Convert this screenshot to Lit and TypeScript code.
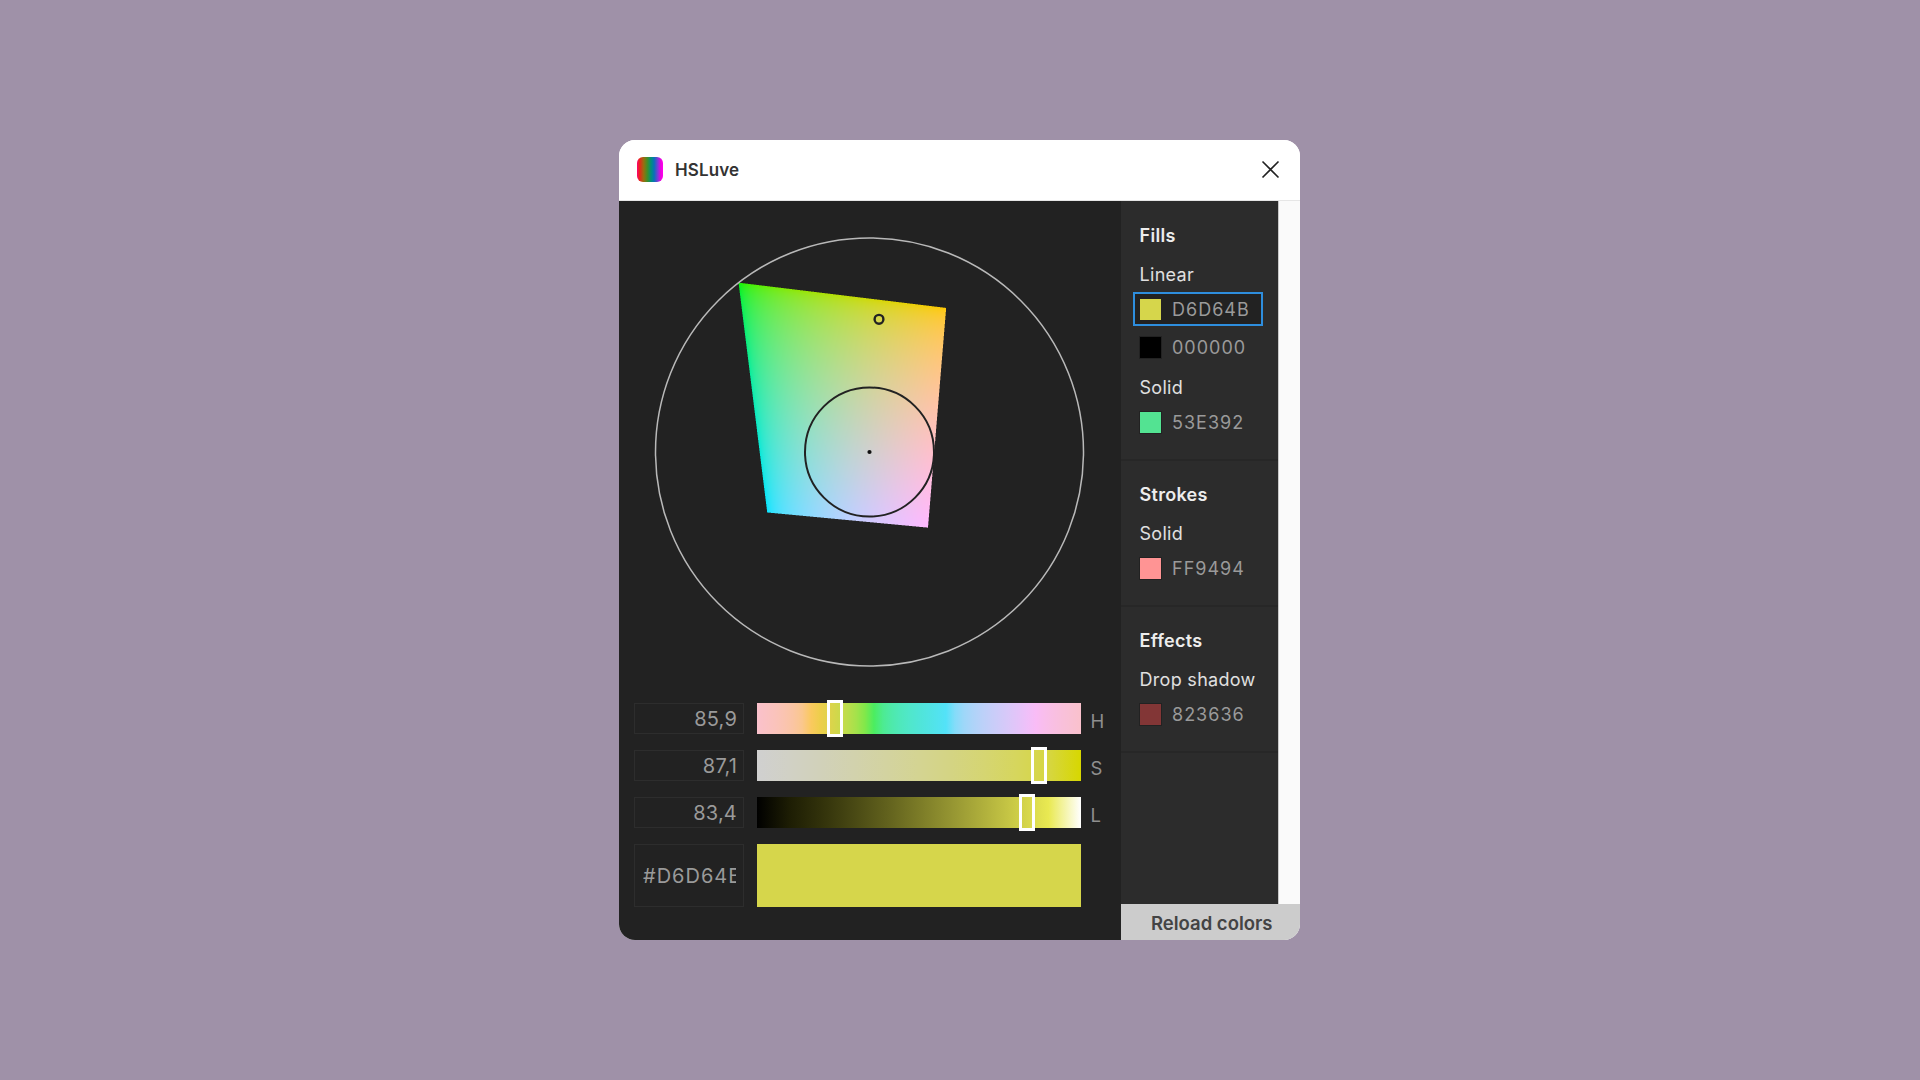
import { LitElement, html, css } from "lit";
import { customElement } from "lit/decorators.js";

const M = [
  [3.240969941904521, -1.537383177570093, -0.498610760292],
  [-0.96924363628087, 1.87596750150772, 0.041555057407175],
  [0.055630079696993, -0.20397695888897, 1.056971514242878],
];
const KAPPA = 903.2962962;
const EPS = 0.0088564516;
const REF_U = 0.19783000664283;
const REF_V = 0.46831999493879;

function luvToLinear(L: number, u: number, v: number): number[] {
  if (L <= 0.00001) return [0, 0, 0];
  const Y = L > 8 ? Math.pow((L + 16) / 116, 3) : L / KAPPA;
  const U = u / (13 * L) + REF_U;
  const V = v / (13 * L) + REF_V;
  const X = (-9 * Y * U) / ((U - 4) * V - U * V);
  const Z = (9 * Y - 15 * V * Y - V * X) / (3 * V);
  return M.map((r) => r[0] * X + r[1] * Y + r[2] * Z);
}
const gamma = (c: number) =>
  c <= 0.0031308 ? 12.92 * c : 1.055 * Math.pow(c, 1 / 2.4) - 0.055;
const toByte = (c: number) =>
  Math.round(Math.min(1, Math.max(0, gamma(Math.max(0, c)))) * 255);

function maxChroma(L: number, H: number): number {
  const s1 = Math.pow(L + 16, 3) / 1560896;
  const s2 = s1 > EPS ? s1 : L / KAPPA;
  const h = (H / 180) * Math.PI;
  let best = Infinity;
  for (const [m1, m2, m3] of M) {
    for (const t of [0, 1]) {
      const top1 = (284517 * m1 - 94839 * m3) * s2;
      const top2 = (838422 * m3 + 769860 * m2 + 731718 * m1) * L * s2 - 769860 * t * L;
      const bottom = (632260 * m3 - 126452 * m2) * s2 + 126452 * t;
      const len = top2 / bottom / (Math.sin(h) - (top1 / bottom) * Math.cos(h));
      if (len >= 0 && len < best) best = len;
    }
  }
  return best;
}
function hsluv(H: number, S: number, L: number): string {
  if (L > 99.9999) return "rgb(255,255,255)";
  if (L < 0.00001) return "rgb(0,0,0)";
  const C = (maxChroma(L, H) / 100) * S;
  const h = (H / 180) * Math.PI;
  const [r, g, b] = luvToLinear(L, C * Math.cos(h), C * Math.sin(h)).map(toByte);
  return `rgb(${r},${g},${b})`;
}
function gradient(fn: (t: number) => string, n: number): string {
  const stops: string[] = [];
  for (let i = 0; i <= n; i++) stops.push(fn(i / n));
  return `linear-gradient(90deg,${stops.join(",")})`;
}

const HUE = 85.9, SAT = 87.1, LIG = 83.4;
const SLIDERS = [
  { value: "85,9", letter: "H", pct: 24.1, bg: gradient((t) => hsluv(t * 360, SAT, LIG), 36) },
  { value: "87,1", letter: "S", pct: SAT, bg: gradient((t) => hsluv(HUE, t * 100, LIG), 10) },
  { value: "83,4", letter: "L", pct: LIG, bg: gradient((t) => hsluv(HUE, SAT, t * 100), 10) },
];

const PANELS = [
  {
    title: "Fills",
    groups: [
      { label: "Linear", rows: [{ hex: "D6D64B", selected: true }, { hex: "000000" }] },
      { label: "Solid", rows: [{ hex: "53E392" }] },
    ],
  },
  { title: "Strokes", groups: [{ label: "Solid", rows: [{ hex: "FF9494" }] }] },
  { title: "Effects", groups: [{ label: "Drop shadow", rows: [{ hex: "823636" }] }] },
];

const SIZE = 501;
const CX = 250.5;
const CY = 251;
const SCALE = 1.657;

@customElement("app-root")
export class AppRoot extends LitElement {
  static styles = css`
    :host {
      display: block;
      width: 1920px;
      height: 1080px;
      box-sizing: border-box;
      padding: 140px 0 0 619px;
      background: #9f91a8;
      font-family: Inter, "Liberation Sans", sans-serif;
    }
    * { box-sizing: border-box; }
    .window {
      width: 681px;
      height: 800px;
      border-radius: 16px;
      overflow: hidden;
      background: #fafafa;
      display: grid;
      grid-template-rows: 61px 1fr;
    }
    .header {
      background: #fff;
      border-bottom: 1px solid #e6e6e6;
      display: flex;
      align-items: center;
      padding: 0 20px 1px 18px;
    }
    .logo {
      width: 26px;
      height: 25px;
      border-radius: 6px;
      background: linear-gradient(90deg, #ff0070 0%, #e8261c 10%, #96700f 26%, #3f8f28 40%, #00907a 54%, #0a70b8 66%, #7a3cd8 80%, #f000e0 92%, #ff00f0 100%);
      margin-right: 12px;
    }
    .title {
      font-size: 17px;
      font-weight: 600;
      letter-spacing: 0.1px;
      color: #333;
      flex: 1;
    }
    .close { display: block; width: 19px; height: 19px; }
    .body { display: flex; min-height: 0; }
    .main { width: 501.5px; background: #222; }
    .picker { position: relative; width: 501px; height: 502px; }
    .picker canvas, .picker svg { position: absolute; left: 0; top: 0; }
    .controls {
      display: grid;
      grid-template-columns: 110px 324.5px auto;
      grid-auto-rows: 31px;
      column-gap: 12.5px;
      row-gap: 16px;
      padding-left: 15px;
    }
    .field {
      border: 1px solid #2d2d2d;
      color: #9a9a9a;
      font-size: 20px;
      letter-spacing: 0.2px;
      display: flex;
      align-items: center;
      justify-content: flex-end;
      padding: 1px 6px 0 7px;
      overflow: hidden;
      white-space: nowrap;
    }
    .track { position: relative; }
    .track-fill { height: 100%; }
    .handle {
      position: absolute;
      top: -3px;
      bottom: -3px;
      width: 16px;
      margin-left: -8px;
      border: 3px solid #fff;
    }
    .letter {
      color: #8f8f8f;
      font-size: 18.5px;
      padding-top: 7px;
      margin-left: -3px;
    }
    .hex { grid-row: span 2; justify-content: flex-start; height: 63px; padding: 1px 7px 0 8px; }
    .hex span { display: block; overflow: hidden; width: 100%; letter-spacing: 1px; }
    .preview { grid-row: span 2; height: 63px; background: #d6d64b; }
    .side { width: 179.5px; display: flex; flex-direction: column; }
    .panels {
      flex: 1;
      width: 158.5px;
      background: #2c2c2c;
      border-right: 1px solid #c8c8c8;
    }
    .panel {
      padding: 22px 0 16px 19px;
      border-bottom: 2px solid #272727;
    }
    .panel:first-child { padding-top: 23px; }
    .panel-title {
      font-size: 18px;
      font-weight: 600;
      letter-spacing: 0.3px;
      line-height: 24px;
      color: #ededed;
    }
    .group { margin-top: 15px; }
    .panel:first-child .group { margin-top: 15px; }
    .panel:first-child .group + .group { margin-top: 12px; }
    .label {
      font-size: 18px;
      letter-spacing: 0.3px;
      line-height: 24px;
      color: #e0e0e0;
      margin-bottom: 5px;
    }
    .row {
      width: 130.5px;
      height: 34px;
      margin: 0 0 4px -7px;
      padding-left: 4.5px;
      border: 2px solid transparent;
      display: flex;
      align-items: center;
      gap: 10px;
      font-size: 18px;
      letter-spacing: 1px;
      color: #9a9a9a;
    }
    .row.selected { border-color: #2e8ede; background: #222; }
    .swatch {
      width: 23px;
      height: 23px;
      border: 1px solid #222;
      flex: none;
    }
    .reload {
      height: 36px;
      background: #ccc;
      color: #444;
      font-size: 18.5px;
      font-weight: 600;
      display: flex;
      align-items: center;
      justify-content: center;
      padding: 2px 0 0 3px;
    }
  `;

  firstUpdated() {
    const canvas = this.renderRoot.querySelector("canvas") as HTMLCanvasElement;
    const ctx = canvas.getContext("2d")!;
    const img = ctx.createImageData(SIZE, SIZE);
    const N = 3;
    const inGamut = (c: number) => c >= -0.0004 && c <= 1.0004;
    for (let y = 70; y < 340; y++) {
      for (let x = 110; x < 340; x++) {
        let hits = 0, cr = 0, cg = 0, cb = 0;
        for (let j = 0; j < N; j++) {
          for (let i = 0; i < N; i++) {
            const px = x + (i + 0.5) / N, py = y + (j + 0.5) / N;
            const lin = luvToLinear(LIG, (px - CX) / SCALE, -(py - CY) / SCALE);
            if (lin.every(inGamut)) {
              hits++;
              cr += toByte(lin[0]); cg += toByte(lin[1]); cb += toByte(lin[2]);
            }
          }
        }
        if (hits) {
          const o = (y * SIZE + x) * 4;
          img.data[o] = cr / hits;
          img.data[o + 1] = cg / hits;
          img.data[o + 2] = cb / hits;
          img.data[o + 3] = (hits / (N * N)) * 255;
        }
      }
    }
    ctx.putImageData(img, 0, 0);
  }

  render() {
    return html`
      <div class="window">
        <div class="header">
          <div class="logo"></div>
          <div class="title">HSLuve</div>
          <svg class="close" viewBox="0 0 19 19" fill="none" stroke="#222" stroke-width="1.6">
            <path d="M1.5 1.5 17.5 17.5M17.5 1.5 1.5 17.5"></path>
          </svg>
        </div>
        <div class="body">
          <div class="main">
            <div class="picker">
              <canvas width="501" height="501"></canvas>
              <svg width="501" height="501" viewBox="0 0 501 501" fill="none">
                <circle cx="250.5" cy="251" r="214" stroke="#b9b9b9" stroke-width="1.5"></circle>
                <circle cx="250.5" cy="251" r="64.5" stroke="#222" stroke-width="2"></circle>
                <circle cx="250.5" cy="251" r="2.1" fill="#111"></circle>
                <circle cx="260" cy="118.3" r="4.4" stroke="#222" stroke-width="2.4"></circle>
              </svg>
            </div>
            <div class="controls">
              ${SLIDERS.map(
                (s) => html`
                  <div class="field">${s.value}</div>
                  <div class="track">
                    <div class="track-fill" style="background:${s.bg}"></div>
                    <div class="handle" style="left:${s.pct}%"></div>
                  </div>
                  <div class="letter">${s.letter}</div>
                `
              )}
              <div class="field hex"><span>#D6D64B</span></div>
              <div class="preview"></div>
            </div>
          </div>
          <div class="side">
            <div class="panels">
              ${PANELS.map(
                (p) => html`
                  <div class="panel">
                    <div class="panel-title">${p.title}</div>
                    ${p.groups.map(
                      (g) => html`
                        <div class="group">
                          <div class="label">${g.label}</div>
                          ${g.rows.map(
                            (r: { hex: string; selected?: boolean }) => html`
                              <div class="row ${r.selected ? "selected" : ""}">
                                <div class="swatch" style="background:#${r.hex}"></div>
                                <span>${r.hex}</span>
                              </div>
                            `
                          )}
                        </div>
                      `
                    )}
                  </div>
                `
              )}
            </div>
            <div class="reload">Reload colors</div>
          </div>
        </div>
      </div>
    `;
  }
}
